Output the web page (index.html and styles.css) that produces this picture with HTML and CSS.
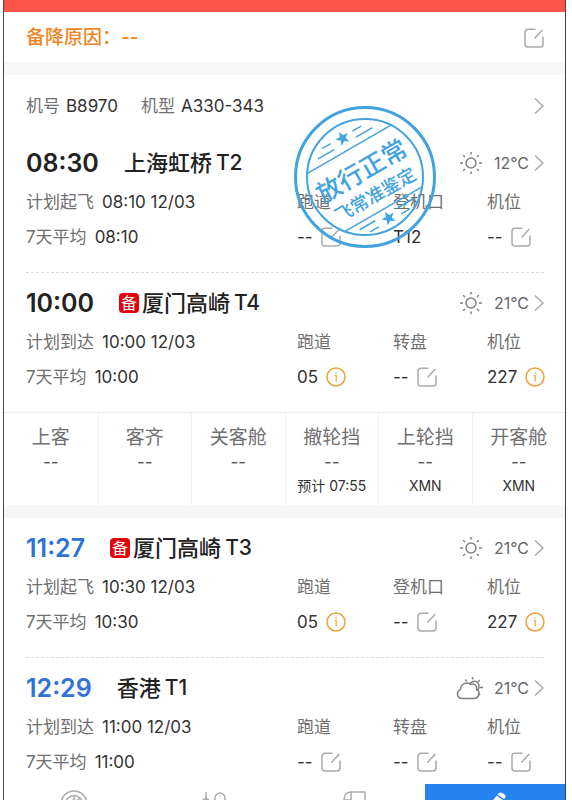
FILE: index.html
```html
<!DOCTYPE html>
<html lang="zh-CN">
<head>
<meta charset="utf-8">
<meta name="viewport" content="width=device-width, initial-scale=1">
<title>航班详情</title>
<link rel="stylesheet" href="styles.css">
</head>
<body>
<svg class="sprite" aria-hidden="true">
  <symbol id="edit" viewBox="0 0 20 20"><path d="M11.5 1.2H4A3 3 0 0 0 1 4.2V16a3 3 0 0 0 3 3h12a3 3 0 0 0 3-3V8.500M10.500 10.500 18.300 2"/></symbol>
  <symbol id="info" viewBox="0 0 20 20"><circle cx="10" cy="10" r="9"/><path stroke-width="1.2" d="M8.800 8.500h1.400v6M10 5.200v1.500"/></symbol>
  <symbol id="next" viewBox="0 0 10 18"><path d="M1 1.500 9 9l-8 7.500"/></symbol>
  <symbol id="sun" viewBox="0 0 24 24"><circle cx="12" cy="12" r="5"/><path d="M12 1v2.500M12 20.500V23M1 12h3M20 12h3M4.200 4.200 6 6M18 18l1.800 1.800M4.200 19.800 6 18M18 6l1.800-1.800"/></symbol>
  <symbol id="cloud" viewBox="0 0 28 24"><path d="M6.500 22.500h12.500a5 5 0 0 0 2.500-9.300 4 4 0 0 0-5.500-4.800 6.500 6.500 0 0 0-10.500 5.200 4.600 4.600 0 0 0 1 8.900Z"/><path d="M14.500 8.500a5 5 0 1 1 7 6.200M17.500 1v2.500M10.500 3.500l1.200 1.800M24.800 4l-1.800 1.700M25 11.500h3M23.500 17.500l1.600 1.400"/></symbol>
</svg>
<main class="screen">
  <div class="banner"></div>
  <section class="reason">
    <span>备降原因：--</span>
    <button class="icon-btn" aria-label="编辑备降原因"><svg class="edit"><use href="#edit"/></svg></button>
  </section>
  <section class="card">
    <a class="aircraft" href="#aircraft">
      <span class="label">机号</span><span class="value">B8970</span>
      <span class="label model">机型</span><span class="value">A330-343</span>
      <svg class="next"><use href="#next"/></svg>
    </a>
    <article class="leg">
      <header class="head">
        <time class="time">08:30</time><h2 class="city">上海虹桥<span class="terminal">T2</span></h2>
        <a class="weather" href="#weather"><svg class="sun"><use href="#sun"/></svg><span>12°C</span><svg class="next"><use href="#next"/></svg></a>
      </header>
      <div class="row"><p class="plan"><span class="label">计划起飞</span><span class="value">08:10 12/03</span></p><span class="label">跑道</span><span class="label">登机口</span><span class="label">机位</span></div>
      <div class="row"><p class="plan"><span class="label">7天平均</span><span class="value">08:10</span></p>
        <p class="cell">--<button class="icon-btn" aria-label="编辑跑道"><svg class="edit"><use href="#edit"/></svg></button></p>
        <p class="cell">T12</p>
        <p class="cell">--<button class="icon-btn" aria-label="编辑机位"><svg class="edit"><use href="#edit"/></svg></button></p></div>
      <svg class="stamp" viewBox="-72 -72 144 144" role="img" aria-label="放行正常 飞常准鉴定">
        <circle r="69.500" stroke-width="3"/><circle r="58" stroke-width="2"/>
        <g transform="rotate(-30)">
          <path stroke-width="1.500" d="M-48-32H48M-44 37H44M-23-46h10M-32-39h19M12-46h10M12-39h19M-31 43h18M-23 50h10M13 43h18M13 50h10"/>
          <path class="fill" d="M0-52l1.900 5h5.200l-4.200 3.300 1.600 5.200-4.500-3.100-4.500 3.100 1.600-5.200-4.200-3.300h5.200ZM0 40l1.900 5h5.200l-4.200 3.300 1.600 5.200-4.500-3.100-4.500 3.100 1.600-5.200-4.200-3.300h5.200Z"/>
          <text class="stamp-main" y="2">放行正常</text>
          <text class="stamp-sub" y="27">飞常准鉴定</text>
        </g>
      </svg>
    </article>
    <article class="leg">
      <header class="head">
        <time class="time">10:00</time><h2 class="city"><span class="alt">备</span>厦门高崎<span class="terminal">T4</span></h2>
        <a class="weather" href="#weather"><svg class="sun"><use href="#sun"/></svg><span>21°C</span><svg class="next"><use href="#next"/></svg></a>
      </header>
      <div class="row"><p class="plan"><span class="label">计划到达</span><span class="value">10:00 12/03</span></p><span class="label">跑道</span><span class="label">转盘</span><span class="label">机位</span></div>
      <div class="row"><p class="plan"><span class="label">7天平均</span><span class="value">10:00</span></p>
        <p class="cell">05<button class="icon-btn" aria-label="跑道说明"><svg class="info"><use href="#info"/></svg></button></p>
        <p class="cell">--<button class="icon-btn" aria-label="编辑转盘"><svg class="edit"><use href="#edit"/></svg></button></p>
        <p class="cell">227<button class="icon-btn" aria-label="机位说明"><svg class="info"><use href="#info"/></svg></button></p></div>
    </article>
    <dl class="steps">
      <div><dt>上客</dt><dd>--</dd></div>
      <div><dt>客齐</dt><dd>--</dd></div>
      <div><dt>关客舱</dt><dd>--</dd></div>
      <div><dt>撤轮挡</dt><dd>--</dd><dd class="note">预计 07:55</dd></div>
      <div><dt>上轮挡</dt><dd>--</dd><dd class="note">XMN</dd></div>
      <div><dt>开客舱</dt><dd>--</dd><dd class="note">XMN</dd></div>
    </dl>
  </section>
  <section class="card">
    <article class="leg">
      <header class="head">
        <time class="time est">11:27</time><h2 class="city"><span class="alt">备</span>厦门高崎<span class="terminal">T3</span></h2>
        <a class="weather" href="#weather"><svg class="sun"><use href="#sun"/></svg><span>21°C</span><svg class="next"><use href="#next"/></svg></a>
      </header>
      <div class="row"><p class="plan"><span class="label">计划起飞</span><span class="value">10:30 12/03</span></p><span class="label">跑道</span><span class="label">登机口</span><span class="label">机位</span></div>
      <div class="row"><p class="plan"><span class="label">7天平均</span><span class="value">10:30</span></p>
        <p class="cell">05<button class="icon-btn" aria-label="跑道说明"><svg class="info"><use href="#info"/></svg></button></p>
        <p class="cell">--<button class="icon-btn" aria-label="编辑登机口"><svg class="edit"><use href="#edit"/></svg></button></p>
        <p class="cell">227<button class="icon-btn" aria-label="机位说明"><svg class="info"><use href="#info"/></svg></button></p></div>
    </article>
    <article class="leg last">
      <header class="head">
        <time class="time est">12:29</time><h2 class="city">香港<span class="terminal">T1</span></h2>
        <a class="weather" href="#weather"><svg class="cloud"><use href="#cloud"/></svg><span>21°C</span><svg class="next"><use href="#next"/></svg></a>
      </header>
      <div class="row"><p class="plan"><span class="label">计划到达</span><span class="value">11:00 12/03</span></p><span class="label">跑道</span><span class="label">转盘</span><span class="label">机位</span></div>
      <div class="row"><p class="plan"><span class="label">7天平均</span><span class="value">11:00</span></p>
        <p class="cell">--<button class="icon-btn" aria-label="编辑跑道"><svg class="edit"><use href="#edit"/></svg></button></p>
        <p class="cell">--<button class="icon-btn" aria-label="编辑转盘"><svg class="edit"><use href="#edit"/></svg></button></p>
        <p class="cell">--<button class="icon-btn" aria-label="编辑机位"><svg class="edit"><use href="#edit"/></svg></button></p></div>
    </article>
  </section>
  <nav class="tabs">
    <button aria-label="雷达"><svg viewBox="0 0 28 28"><circle cx="14" cy="14" r="13"/><circle cx="14" cy="14" r="8.500"/><circle cx="14" cy="14" r="4"/><path d="M14 5v9l6-6"/></svg></button>
    <button aria-label="起降"><svg viewBox="0 0 28 28"><path d="M6 2v22M2 11l4-3 4 3M15 24V8a5 5 0 0 1 10 0v16"/></svg></button>
    <button aria-label="分享"><svg viewBox="0 0 28 28"><path d="M10 2h14v23H6V10M10 2v8H3c0-5 3-8 7-8Z"/></svg></button>
    <button class="active" aria-label="编辑"><svg viewBox="0 0 28 28"><path d="M17 4a3 3 0 0 1 4-1l2 1a3 3 0 0 1 1 4L10 24l-7 2 2-7Z"/><path class="cut" d="m16 5 7 5"/></svg></button>
  </nav>
</main>
</body>
</html>
```
FILE: styles.css
```css
* { box-sizing: border-box; }
body { margin: 0; background: #fff; color: #333; font: 17px/24px Inter, "Noto Sans CJK SC", sans-serif; }
p, h2, dl, dd { margin: 0; }
a { color: inherit; text-decoration: none; }
button { padding: 0; border: 0; background: none; font: inherit; cursor: pointer; }
svg { display: block; flex: none; fill: none; stroke: #aaa; stroke-width: 1.5; }
.sprite { position: absolute; width: 0; height: 0; }
.screen { height: 100vh; overflow: hidden; margin: 0 6px 0 3px; border: solid #444; border-width: 0 1px; }
.banner { height: 12px; background: #fc534b; }
.reason { display: flex; align-items: center; justify-content: space-between; height: 50px; padding: 2px 21px 0 22px; color: #ee8522; font-size: 19px; font-weight: 500; }
.card { border-top: 13px solid #f7f7f7; }
.aircraft { display: flex; align-items: center; height: 58px; padding: 4px 21px 0 22px; }
.label { color: #707070; white-space: nowrap; }
.value { margin-left: 8px; white-space: nowrap; }
.aircraft .value { margin-left: 6px; }
.model { margin-left: 23px; }
.next { width: 10px; height: 18px; margin-left: auto; }
.edit, .info { width: 20px; height: 20px; }
.info { stroke: #f0a03c; }
.leg { position: relative; padding: 9px 0 18px 22px; }
.leg::after { content: ""; display: block; margin: 0 21px -18px 0; padding-top: 18px; border-bottom: 1px dashed #ddd; }
.leg:nth-of-type(2):not(.last)::after { margin-left: -22px; margin-right: 0; border-bottom: 1px solid #eee; }
.leg.last { padding-bottom: 5px; }
.leg.last::after { display: none; }
.head { display: flex; align-items: center; height: 41px; margin-bottom: 1px; padding-right: 21px; }
.time { color: #222; font-size: 25px; font-weight: 600; }
.est { color: #2f73d4; }
.city { display: flex; align-items: center; margin-left: 25px; color: #222; font-size: 22px; font-weight: 500; white-space: nowrap; }
.terminal { margin-left: 4px; font-size: 21px; }
.alt { width: 20px; height: 20px; margin-right: 3px; border-radius: 4px; background: #e6000c; color: #fff; font-size: 16px; font-weight: 400; line-height: 20px; text-align: center; }
.weather { display: flex; align-items: center; margin-left: auto; color: #666; font-size: 16px; }
.weather span { margin-left: 11px; }
.weather .next { margin-left: 5px; }
.sun { width: 24px; height: 24px; stroke: #808080; }
.cloud { width: 28px; height: 24px; stroke: #808080; }
.row { display: grid; grid-template-columns: 271fr 96fr 94fr 78fr; align-items: center; height: 35px; }
.row > * { min-width: 0; }
.plan, .cell { display: flex; align-items: center; }
.cell { gap: 8px; }
.stamp { position: absolute; top: -28px; left: calc(52% - 3px); width: 144px; height: 144px; stroke: #43a3df; pointer-events: none; }
.stamp .fill { fill: #43a3df; stroke: none; }
.stamp text { fill: #43a3df; stroke: none; font-family: "Noto Sans CJK SC", sans-serif; font-weight: 500; text-anchor: middle; }
.stamp-main { font-size: 25px; }
.stamp-sub { font-size: 18px; }
.steps { display: grid; grid-template-columns: repeat(6, 1fr); height: 92px; }
.steps div { padding-top: 13px; text-align: center; }
.steps div + div { border-left: 1px solid #f2f2f2; }
.steps dt { color: #707070; font-size: 19px; }
.steps dd { color: #555; }
.steps .note { color: #333; font-size: 14px; white-space: nowrap; }
.tabs { display: grid; grid-template-columns: repeat(4, 1fr); height: 56px; }
.tabs button { display: flex; justify-content: center; padding-top: 6px; }
.tabs svg { width: 28px; height: 28px; }
.tabs .active { background: #2583ef; }
.active svg { fill: #fff; stroke: none; }
.active .cut { stroke: #2583ef; }
```
